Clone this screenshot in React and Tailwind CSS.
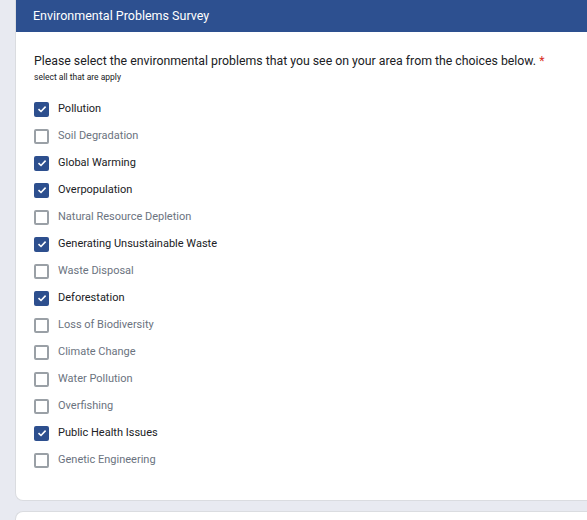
const options = [
  { label: 'Pollution', checked: true },
  { label: 'Soil Degradation', checked: false },
  { label: 'Global Warming', checked: true },
  { label: 'Overpopulation', checked: true },
  { label: 'Natural Resource Depletion', checked: false },
  { label: 'Generating Unsustainable Waste', checked: true },
  { label: 'Waste Disposal', checked: false },
  { label: 'Deforestation', checked: true },
  { label: 'Loss of Biodiversity', checked: false },
  { label: 'Climate Change', checked: false },
  { label: 'Water Pollution', checked: false },
  { label: 'Overfishing', checked: false },
  { label: 'Public Health Issues', checked: true },
  { label: 'Genetic Engineering', checked: false },
]

const Check = ({ checked }) =>
  checked ? (
    <span className="w-[15px] h-[15px] rounded-[2px] bg-[#2d4f8e] flex items-center justify-center shrink-0">
      <svg width="10" height="10" viewBox="0 0 10 10" fill="none">
        <path d="M1.5 5.2 L4 7.5 L8.6 2.6" stroke="white" strokeWidth="1.6" />
      </svg>
    </span>
  ) : (
    <span className="w-[15px] h-[15px] rounded-[2px] border-2 border-[#9aa0a6] bg-white shrink-0" />
  )

export default function App() {
  return (
    <div className="w-[587px] h-[520px] overflow-hidden bg-[#e8eaf1] pl-[15px] font-['Roboto',sans-serif]">
      <div className="bg-white rounded-bl-[8px] border-l border-b border-[#dadce0] h-[501px] overflow-hidden">
        <div className="bg-[#2d5090] h-[32px] flex items-center pl-[17px] text-white text-[12.5px]">
          Environmental Problems Survey
        </div>
        <div className="pl-[18px] pt-[20px]">
          <div className="text-[12.3px] text-[#202124] leading-[18px]">
            Please select the environmental problems that you see on your area from the choices below. <span className="text-[#d93025]">*</span>
          </div>
          <div className="text-[8.5px] text-[#202124] mt-[1px]">select all that are apply</div>
          <div className="mt-[18px] flex flex-col gap-[12px]">
            {options.map((o) => (
              <div key={o.label} className="flex items-center h-[15px] gap-[9px]">
                <Check checked={o.checked} />
                <span className={`text-[11px] ${o.checked ? 'text-[#202124]' : 'text-[#6b7380]'}`}>{o.label}</span>
              </div>
            ))}
          </div>
        </div>
      </div>
      <div className="mt-[10px] bg-white rounded-tl-[8px] border-l border-t border-[#dadce0] h-[20px]" />
    </div>
  )
}
